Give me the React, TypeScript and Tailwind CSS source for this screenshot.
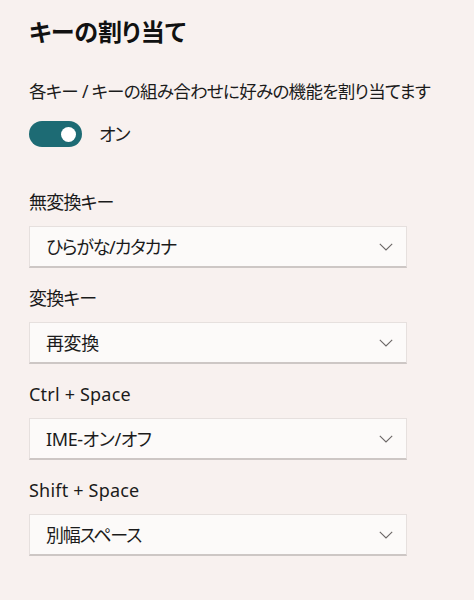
import React from "react";

const Chevron = () => (
  <svg width="14" height="8" viewBox="0 0 14 8" fill="none" className="shrink-0">
    <path d="M0.8 0.8 L7 7 L13.2 0.8" stroke="#6b6766" strokeWidth="1.1" />
  </svg>
);

const Dropdown = ({ value, jp }: { value: string; jp?: boolean }) => (
  <div className="flex h-[42px] w-[378px] items-center justify-between border border-[#e6e0de] border-b-2 border-b-[#cdc7c5] bg-[#fcfaf9] pl-[16px] pr-[13px] text-[18px] leading-[24px] text-[#1b1b1b]">
    <span className={jp ? "tracking-[-1.2px]" : "tracking-[-0.4px]"}>{value}</span>
    <Chevron />
  </div>
);

const Field = ({ label, value, jpLabel, jpValue }: { label: string; value: string; jpLabel?: boolean; jpValue?: boolean }) => (
  <div className="flex flex-col">
    <div className={`h-[24px] text-[18px] leading-[24px] text-[#1b1b1b] ${jpLabel ? "tracking-[-0.8px]" : "tracking-[0.2px]"}`}>{label}</div>
    <div className="mt-[12px]">
      <Dropdown value={value} jp={jpValue} />
    </div>
  </div>
);

export default function App() {
  return (
    <div
      className="min-h-[600px] w-full bg-[#f8f1ef] px-[29px] pt-[16px] [font-feature-settings:'palt'] antialiased"
      style={{ fontFamily: '"Noto Sans", "Noto Sans CJK JP", sans-serif' }}
    >
      <h1 className="h-[32px] text-[24px] font-bold leading-[32px] text-[#111]">キーの割り当て</h1>
      <p className="mt-[31px] h-[24px] whitespace-nowrap text-[17.5px] leading-[24px] tracking-[-0.7px] text-[#1b1b1b]">
        各キー / キーの組み合わせに好みの機能を割り当てます
      </p>
      <div className="mt-[18px] flex h-[26px] items-center">
        <div className="flex h-[26px] w-[53px] items-center justify-end rounded-full bg-[#1d6b74] pr-[6px]">
          <div className="h-[15px] w-[15px] rounded-full bg-white" />
        </div>
        <span className="ml-[17px] text-[18px] leading-[24px] tracking-[-1px] text-[#1b1b1b]">オン</span>
      </div>
      <div className="mt-[43px] flex flex-col gap-[18px]">
        <Field label="無変換キー" value="ひらがな/カタカナ" jpLabel jpValue />
        <Field label="変換キー" value="再変換" jpLabel />
        <Field label="Ctrl + Space" value="IME-オン/オフ" />
        <Field label="Shift + Space" value="別幅スペース" jpValue />
      </div>
    </div>
  );
}
